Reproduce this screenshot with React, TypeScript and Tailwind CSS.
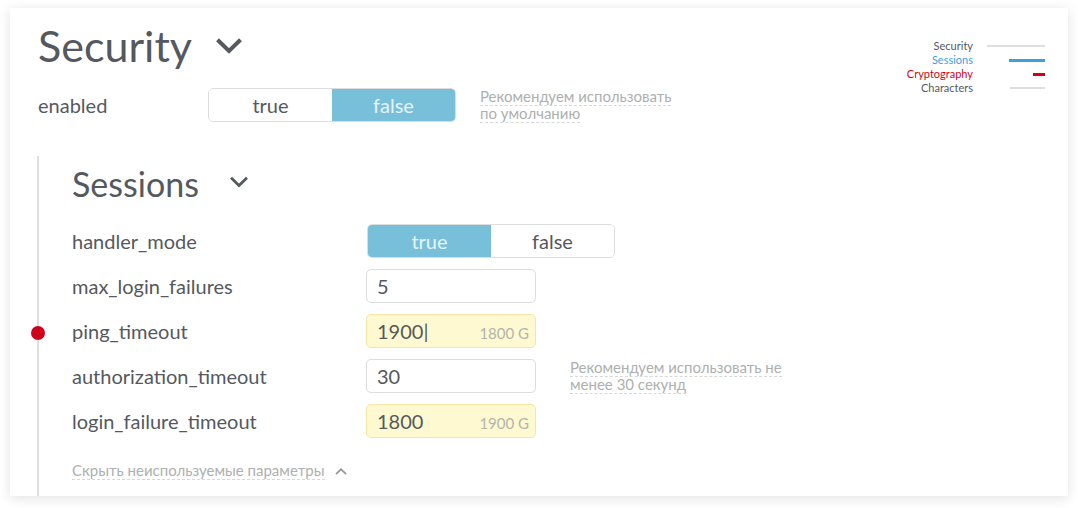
import { useState, type ReactNode } from 'react';

function Chevron({ className, width }: { className: string; width: number }) {
  return (
    <svg viewBox="0 0 26 16" className={className} fill="none" stroke="currentColor" strokeWidth={width} aria-hidden="true">
      <path d="M1.5 1.8 L13 13 L24.5 1.8" />
    </svg>
  );
}

function Toggle({ label, initial }: { label: string; initial: boolean }) {
  const [value, setValue] = useState(initial);
  const on = 'flex-1 bg-[#78c0da] text-[#e6f4f9]';
  const off = 'flex-1 bg-white text-[#54595f]';
  return (
    <div role="group" aria-label={label} className="flex h-[34px] w-[248px] shrink-0 overflow-hidden rounded-[5px] border border-[#dcdddf] text-xl leading-8">
      <button type="button" aria-pressed={value} onClick={() => setValue(true)} className={value ? on : off}>
        true
      </button>
      <button type="button" aria-pressed={!value} onClick={() => setValue(false)} className={value ? off : on}>
        false
      </button>
    </div>
  );
}

function Hint({ children }: { children: ReactNode }) {
  return (
    <p className="text-[15px] leading-[17px] text-[#adb0af]">
      <span className="border-b border-dashed border-[#d5d8d7]">{children}</span>
    </p>
  );
}

function Field({ name, initial, previous, hint }: { name: string; initial: string; previous?: string; hint?: string }) {
  const [value, setValue] = useState(initial);
  return (
    <div className="flex h-[34px] items-center">
      <label htmlFor={name} className="w-[294px] shrink-0">
        {name}
      </label>
      <div
        className={
          previous
            ? 'flex h-[34px] w-[170px] shrink-0 items-center rounded-[5px] border border-[#fbe3a4] bg-[#fef9d1] pr-1.5 pl-2.5'
            : 'flex h-[34px] w-[170px] shrink-0 items-center rounded-[5px] border border-[#dcdddf] bg-white pr-1.5 pl-2.5'
        }
      >
        <input
          id={name}
          value={value}
          onChange={(e) => setValue(e.target.value)}
          className="min-w-0 flex-1 bg-transparent outline-none"
        />
        {previous && <span className="pt-1 text-[15px] leading-5 text-[#b3b5ab]">{previous}</span>}
      </div>
      {hint && (
        <div className="ml-[34px] w-[220px]">
          <Hint>{hint}</Hint>
        </div>
      )}
    </div>
  );
}

const sections = [
  { name: 'Security', text: 'text-[#54595f]', bar: 'h-0.5 w-[58px] bg-[#dedede]' },
  { name: 'Sessions', text: 'text-[#3d9fe0]', bar: 'h-[3px] w-9 bg-[#3d9fe0]' },
  { name: 'Cryptography', text: 'text-[#d0021b]', bar: 'h-[3px] w-3 bg-[#d0021b]' },
  { name: 'Characters', text: 'text-[#54595f]', bar: 'h-0.5 w-[35px] bg-[#dedede]' },
];

export default function App() {
  return (
    <div className="bg-white px-2.5 pt-2 pb-3 font-['Lato',sans-serif] text-[#54595f]">
      <main className="bg-white pl-[27px] shadow-[0_2px_12px_rgba(0,0,0,0.12)]">
        <div className="flex items-start justify-between pr-[23px] pl-px">
          <div className="pt-3">
            <div className="flex items-center">
              <h1 className="text-[43px] leading-[52px]">Security</h1>
              <button type="button" aria-label="Collapse Security" className="ml-6">
                <Chevron className="h-4 w-[26px]" width={4} />
              </button>
            </div>
            <div className="mt-4 flex h-[34px] items-center text-xl">
              <span className="w-[170px] shrink-0">enabled</span>
              <Toggle label="enabled" initial={false} />
              <div className="ml-6 w-[200px]">
                <Hint>Рекомендуем использовать по умолчанию</Hint>
              </div>
            </div>
          </div>
          <nav className="flex flex-col pt-[31px] text-[11px]">
            {sections.map((s) => (
              <a key={s.name} href={'#' + s.name} className="flex h-3.5 items-center justify-end">
                <span className={s.text}>{s.name}</span>
                <span className="ml-3 flex w-[60px] justify-end">
                  <span className={s.bar} />
                </span>
              </a>
            ))}
          </nav>
        </div>

        <section className="mt-[34px] border-l-2 border-[#dedfe0] pb-4 pl-[33px]">
          <div className="flex items-center pt-1.5">
            <h2 className="text-[34px] leading-11">Sessions</h2>
            <button type="button" aria-label="Collapse Sessions" className="-mt-1 ml-[31px]">
              <Chevron className="h-3 w-[18px]" width={4} />
            </button>
          </div>
          <div className="mt-[18px] flex flex-col gap-[11px] text-xl">
            <div className="flex h-[34px] items-center">
              <span className="w-[295px] shrink-0">handler_mode</span>
              <Toggle label="handler_mode" initial={true} />
            </div>
            <Field name="max_login_failures" initial="5" />
            <div className="relative">
              <span className="absolute top-3 -left-[41px] size-3.5 rounded-full bg-[#d0021b]" />
              <Field name="ping_timeout" initial="1900|" previous="1800 G" />
            </div>
            <Field name="authorization_timeout" initial="30" hint="Рекомендуем использовать не менее 30 секунд" />
            <Field name="login_failure_timeout" initial="1800" previous="1900 G" />
          </div>
          <button type="button" className="mt-6 flex items-center text-[15px] leading-[17px] text-[#adb0af]">
            <span className="border-b border-dashed border-[#d5d8d7]">Скрыть неиспользуемые параметры</span>
            <Chevron className="ml-2.5 h-[7px] w-[12px] rotate-180 text-[#96999b]" width={4} />
          </button>
        </section>
      </main>
    </div>
  );
}
